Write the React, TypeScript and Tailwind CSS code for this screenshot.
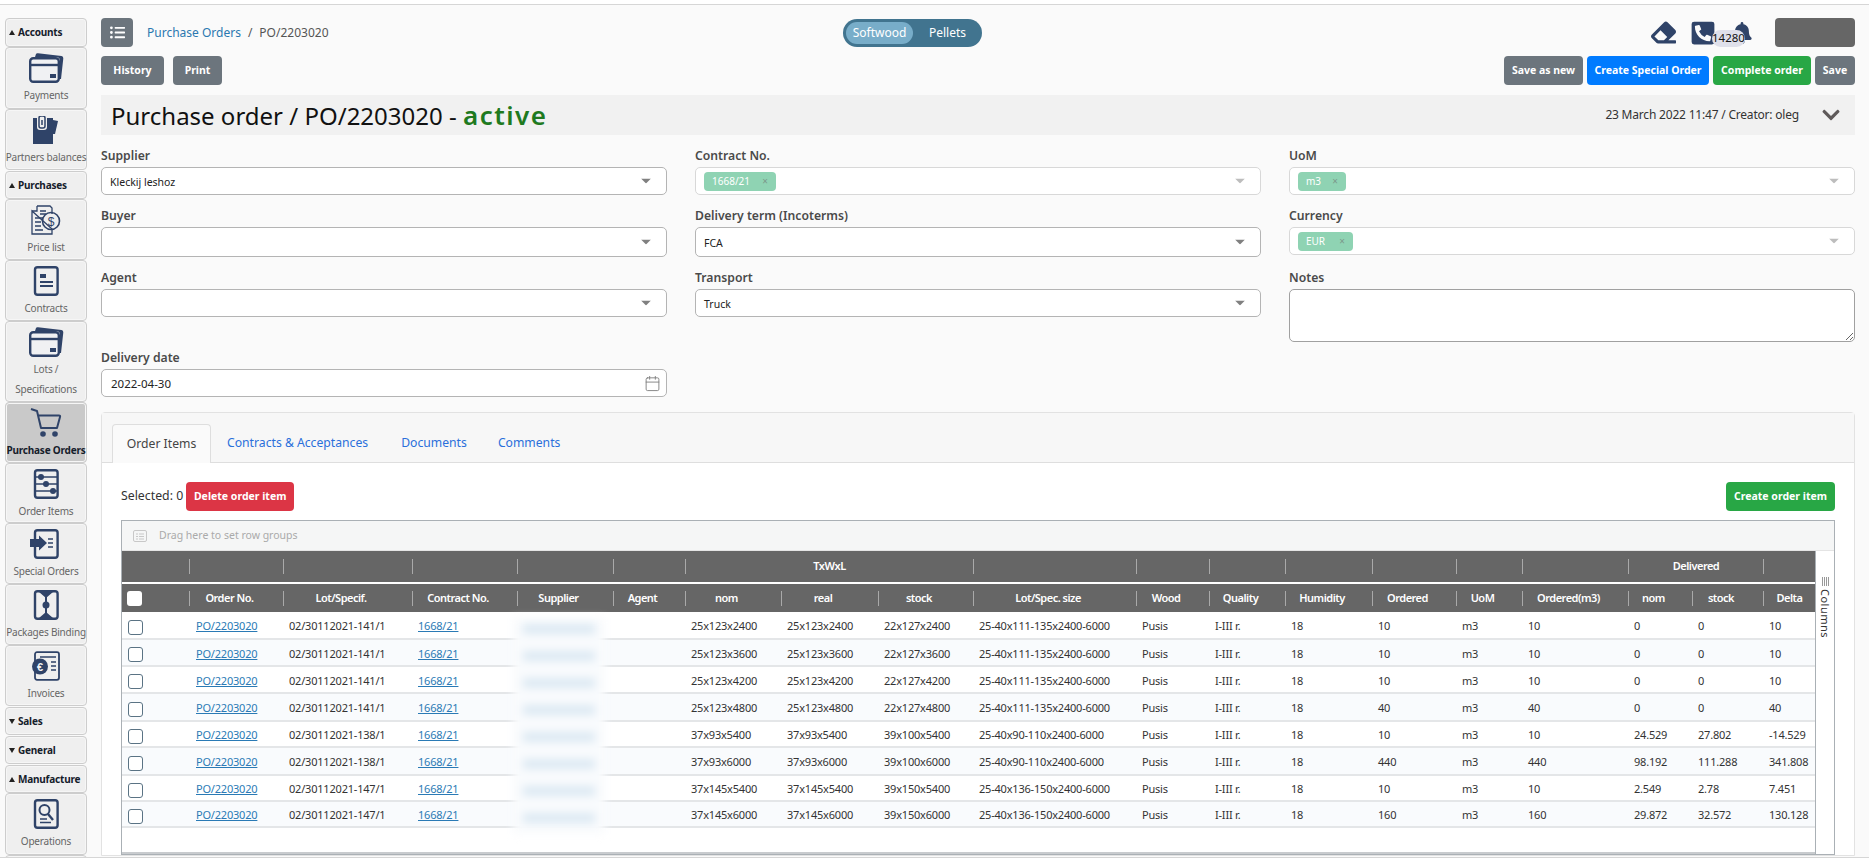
import type { ReactNode } from 'react';
import { Calendar } from 'lucide-react';
import { FaBell, FaChevronDown, FaEraser, FaListUl, FaPhoneSquareAlt } from 'react-icons/fa';

const NAVY = '#2f4368';

const CardIcon = () => (
  <svg width="35" height="30" viewBox="0 0 35 30">
    <path d="M6 4 L7 1 Q7.500 0 9 .3 L32.500 3 Q34.500 3.400 34.300 5.500 L32 26 L31 26 L31 8 Q31 4 27 4 Z" fill={NAVY} />
    <rect x="1.200" y="5.200" width="28.600" height="23.600" rx="3" fill="#f0f1f3" stroke={NAVY} strokeWidth="2.400" />
    <path d="M1 12 H30" stroke={NAVY} strokeWidth="2.400" />
    <rect x="21" y="21" width="6" height="4" fill={NAVY} />
  </svg>
);

const PocketIcon = () => (
  <svg width="28" height="28" viewBox="0 0 28 28">
    <path d="M21 4 L26 5 L23 18 L21 18 Z" fill={NAVY} />
    <path d="M1 2 H5 V11 Q5 14 8 14 H12 Q15 14 15 11 V2 H21 V28 H1 Z" fill={NAVY} />
    <rect x="7" y="0" width="6" height="12" rx="2" fill="none" stroke={NAVY} strokeWidth="1.500" />
    <path d="M10 4 V9" stroke={NAVY} strokeWidth="1.500" />
  </svg>
);

const PriceIcon = () => (
  <svg width="30" height="31" viewBox="0 0 30 31" fill="none" stroke={NAVY} strokeWidth="1.300">
    <path d="M6 1 H19 L21 3 V9 M21 24 V29 H1 V6 Z" />
    <path d="M1 6 H6 V1" />
    <path d="M4 13 H12 M4 17 H10 M4 21 H10 M4 25 H12 M9 6 H15 M9 9 H15" strokeWidth="1.500" />
    <circle cx="20" cy="16" r="8.500" strokeWidth="1.600" />
    <text x="20" y="20.500" textAnchor="middle" fontSize="12" fill={NAVY} stroke="none" fontFamily="Liberation Sans, sans-serif">$</text>
  </svg>
);

const SheetIcon = ({ children }: { children: ReactNode }) => (
  <svg width="32" height="30" viewBox="0 0 32 30" fill="none">
    <rect x="5" y="1.200" width="22.600" height="27.600" rx="2.500" stroke={NAVY} strokeWidth="2.400" />
    {children}
  </svg>
);

const ContractIcon = () => (
  <SheetIcon>
    <rect x="10" y="8" width="6" height="4" fill={NAVY} />
    <path d="M10 16 H23 M10 20 H23" stroke={NAVY} strokeWidth="2" />
  </SheetIcon>
);

const ItemsIcon = () => (
  <SheetIcon>
    <path d="M5 8 H27 M5 15 H27 M5 22 H27" stroke={NAVY} strokeWidth="1.600" />
    <circle cx="11" cy="8" r="3" fill={NAVY} />
    <circle cx="16" cy="15" r="3" fill={NAVY} />
    <circle cx="23" cy="22" r="3" fill={NAVY} />
  </SheetIcon>
);

const SpecialIcon = () => (
  <SheetIcon>
    <path d="M0 10 H9 V6.500 L17 14 L9 21.500 V18 H0 Z" fill={NAVY} />
    <path d="M18 10 H23 M18 14 H23 M18 18 H23" stroke={NAVY} strokeWidth="1.500" />
  </SheetIcon>
);

const BindingIcon = () => (
  <SheetIcon>
    <path d="M16 1 V29" stroke={NAVY} strokeWidth="2" />
    <path d="M9 2 L16 8 L23 2 Z M9 28 L16 22 L23 28 Z" fill={NAVY} />
    <circle cx="16" cy="15" r="3.500" fill={NAVY} />
  </SheetIcon>
);

const InvoiceIcon = () => (
  <svg width="32" height="30" viewBox="0 0 32 30" fill="none">
    <rect x="5" y="1.200" width="24" height="27.600" rx="2" stroke={NAVY} strokeWidth="1.800" />
    <path d="M10 6 H26" stroke={NAVY} strokeWidth="1.500" />
    <circle cx="10" cy="15.500" r="8" fill={NAVY} />
    <text x="10" y="19.500" textAnchor="middle" fontSize="11" fontWeight="700" fill="#f0f1f3" fontFamily="Liberation Sans, sans-serif">€</text>
    <path d="M21 11 H26 M21 15 H26 M21 19 H26" stroke={NAVY} strokeWidth="1.500" />
  </svg>
);

const SearchDocIcon = () => (
  <SheetIcon>
    <circle cx="14.500" cy="11" r="5" stroke={NAVY} strokeWidth="2" />
    <path d="M18 15 L23 21" stroke={NAVY} strokeWidth="2.400" />
    <path d="M10 20 H17 M10 23.500 H21" stroke={NAVY} strokeWidth="1.500" />
  </SheetIcon>
);

const CartIcon = () => (
  <svg width="32" height="30" viewBox="0 0 32 30" fill="none">
    <path d="M1 1 L7 3 L11 20 H27 L30 9 Q30.500 7.500 29 7.500 L8 7.500" stroke={NAVY} strokeWidth="2" strokeLinejoin="round" />
    <circle cx="13" cy="26" r="2.800" fill={NAVY} />
    <circle cx="25" cy="26" r="2.800" fill={NAVY} />
  </svg>
);

const navBoxClass = 'w-full shrink-0 rounded-[4px] border border-[#cdcdcd] shadow-[inset_0_0_0_1px_#f6f6f6]';

function NavHeader({ label, open, className }: { label: string; open: boolean; className: string }) {
  return (
    <div className={`${navBoxClass} flex items-center bg-[#efefef] pl-[3px] text-[10px] font-bold tracking-[-0.2px] text-[#15202b] ${className}`}>
      <svg width="6" height="5" viewBox="0 0 6 5" className="mr-[3px] shrink-0">
        <path d={open ? 'M3 0 L6 5 H0 Z' : 'M0 0 H6 L3 5 Z'} fill="#222" />
      </svg>
      {label}
    </div>
  );
}

function NavItem({ label, icon, className = '', active = false }: { label: ReactNode; icon: ReactNode; className?: string; active?: boolean }) {
  return (
    <div className={`${navBoxClass} flex flex-col items-center pt-[5px] text-center text-[10px] leading-[20px] tracking-[-0.2px] ${active ? 'bg-[#c9c9c9] font-bold text-[#15202b]' : 'bg-[#efefef] text-[#666]'} ${className}`}>
      <div className="flex h-[30px] items-center justify-center">{icon}</div>
      <div className="mt-[2px] whitespace-nowrap">{label}</div>
    </div>
  );
}

function Sidebar() {
  return (
    <aside className="flex w-[82px] shrink-0 flex-col">
      <NavHeader label="Accounts" open className="h-[29px]" />
      <NavItem label="Payments" icon={<CardIcon />} className="h-[62px]" />
      <NavItem label="Partners balances" icon={<PocketIcon />} className="h-[61px]" />
      <NavHeader label="Purchases" open className="mt-px h-[28px]" />
      <NavItem label="Price list" icon={<PriceIcon />} className="h-[61px]" />
      <NavItem label="Contracts" icon={<ContractIcon />} className="h-[61px]" />
      <NavItem label={<>Lots /<br />Specifications</>} icon={<CardIcon />} className="h-[81px]" />
      <NavItem label="Purchase Orders" icon={<CartIcon />} className="h-[61px]" active />
      <NavItem label="Order Items" icon={<ItemsIcon />} className="h-[60px]" />
      <NavItem label="Special Orders" icon={<SpecialIcon />} className="h-[61px]" />
      <NavItem label="Packages Binding" icon={<BindingIcon />} className="h-[61px]" />
      <NavItem label="Invoices" icon={<InvoiceIcon />} className="h-[61px]" />
      <NavHeader label="Sales" open={false} className="mt-px h-[28px]" />
      <NavHeader label="General" open={false} className="mt-px h-[28px]" />
      <NavHeader label="Manufacture" open className="mt-px h-[28px]" />
      <NavItem label="Operations" icon={<SearchDocIcon />} className="h-[62px]" />
      <div className={`${navBoxClass} h-[30px] bg-[#efefef]`} />
    </aside>
  );
}

function Btn({ children, className }: { children: ReactNode; className: string }) {
  return (
    <button className={`flex h-[29px] items-center justify-center rounded-[4px] text-[10.500px] font-bold text-white ${className}`}>
      {children}
    </button>
  );
}

function Arrow({ light = false }: { light?: boolean }) {
  return (
    <svg width="10" height="5" viewBox="0 0 10 5" className="absolute right-[15px] top-1/2 -translate-y-1/2">
      <path d="M0 0 H10 L5 5 Z" fill={light ? '#bdbdbd' : '#808080'} />
    </svg>
  );
}

function Field({ label, children, className = 'pt-[12px]' }: { label: string; children: ReactNode; className?: string }) {
  return (
    <div className={className}>
      <div className="h-[20px] text-[12.200px] leading-[17px] font-semibold text-[#4a4a4a]">{label}</div>
      {children}
    </div>
  );
}

function SelectBox({ value, className = 'h-[28px]' }: { value?: string; className?: string }) {
  return (
    <div className={`relative flex items-center rounded-[5px] border border-[#b4b4b4] bg-white pl-[8px] pt-[3px] text-[10.500px] text-[#222] ${className}`}>
      {value}
      <Arrow />
    </div>
  );
}

function TagBox({ tag, className }: { tag: string; className: string }) {
  return (
    <div className="relative flex h-[28px] items-center rounded-[5px] border border-[#d8d8d8] bg-white pl-[8px]">
      <span className={`flex h-[19px] items-center justify-between rounded-[4px] bg-[#8fd3b3] px-[8px] text-[10px] text-white ${className}`}>
        {tag}
        <span className="text-[#7c9a8c]">×</span>
      </span>
      <Arrow light />
    </div>
  );
}

function Form() {
  return (
    <div className="grid grid-cols-3 gap-x-[28px]">
      <Field label="Supplier"><SelectBox value="Kleckij leshoz" /></Field>
      <Field label="Contract No."><TagBox tag="1668/21" className="w-[72px]" /></Field>
      <Field label="UoM"><TagBox tag="m3" className="w-[48px]" /></Field>
      <Field label="Buyer"><SelectBox className="h-[30px]" /></Field>
      <Field label="Delivery term (Incoterms)"><SelectBox value="FCA" className="h-[30px]" /></Field>
      <Field label="Currency"><TagBox tag="EUR" className="w-[55px]" /></Field>
      <Field label="Agent"><SelectBox /></Field>
      <Field label="Transport"><SelectBox value="Truck" /></Field>
      <Field label="Notes">
        <textarea readOnly className="block h-[53px] w-full rounded-[5px] border border-[#a0a0a0] bg-white" />
      </Field>
      <Field label="Delivery date" className="pt-[7px]">
        <div className="relative flex h-[28px] items-center rounded-[5px] border border-[#b4b4b4] bg-white pl-[9px] pt-px text-[11.500px] text-[#222]">
          2022-04-30
          <Calendar size={17} strokeWidth={1.300} color="#808080" className="absolute right-[5px] top-[5px]" />
        </div>
      </Field>
    </div>
  );
}

const colsClass = 'grid grid-cols-[67px_94px_129px_105px_96px_72px_96px_97px_95px_163px_73px_76px_87px_84px_66px_106px_64px_71px_52px]';

const headers = ['Order No.', 'Lot/Specif.', 'Contract No.', 'Supplier', 'Agent', 'nom', 'real', 'stock', 'Lot/Spec. size', 'Wood', 'Quality', 'Humidity', 'Ordered', 'UoM', 'Ordered(m3)', 'nom', 'stock'];

const rows = [
  ['02/30112021-141/1', '25x123x2400', '25x123x2400', '22x127x2400', '25-40x111-135x2400-6000', '10', '10', '0', '0', '10'],
  ['02/30112021-141/1', '25x123x3600', '25x123x3600', '22x127x3600', '25-40x111-135x2400-6000', '10', '10', '0', '0', '10'],
  ['02/30112021-141/1', '25x123x4200', '25x123x4200', '22x127x4200', '25-40x111-135x2400-6000', '10', '10', '0', '0', '10'],
  ['02/30112021-141/1', '25x123x4800', '25x123x4800', '22x127x4800', '25-40x111-135x2400-6000', '40', '40', '0', '0', '40'],
  ['02/30112021-138/1', '37x93x5400', '37x93x5400', '39x100x5400', '25-40x90-110x2400-6000', '10', '10', '24.529', '27.802', '-14.529'],
  ['02/30112021-138/1', '37x93x6000', '37x93x6000', '39x100x6000', '25-40x90-110x2400-6000', '440', '440', '98.192', '111.288', '341.808'],
  ['02/30112021-147/1', '37x145x5400', '37x145x5400', '39x150x5400', '25-40x136-150x2400-6000', '10', '10', '2.549', '2.78', '7.451'],
  ['02/30112021-147/1', '37x145x6000', '37x145x6000', '39x150x6000', '25-40x136-150x2400-6000', '160', '160', '29.872', '32.572', '130.128'],
];

const rowHeights = ['h-[28px]', 'h-[27px]', 'h-[27px]', 'h-[28px]', 'h-[26px]', 'h-[28px]', 'h-[26px]', 'h-[26px]'];

function HeadCell({ children, className = '', mark = true }: { children?: ReactNode; className?: string; mark?: boolean }) {
  return (
    <div className={`flex items-center justify-center ${className}`}>
      {mark && <span className="h-[15px] w-px shrink-0 bg-[#a9a9a9]" />}
      <span className="flex-1 text-center">{children}</span>
    </div>
  );
}

function Checkbox() {
  return <span className="block size-[15px] rounded-[3px] border border-[#5a7384] bg-white" />;
}

function Cell({ children }: { children?: ReactNode }) {
  return <div className="flex items-center pl-[6px] pt-[3px] whitespace-nowrap">{children}</div>;
}

function OrderRow({ row, index }: { row: string[]; index: number }) {
  const [lot, nom, real, stock, size, ordered, orderedM3, dNom, dStock, delta] = row;
  return (
    <div className={`${colsClass} ${rowHeights[index]} border-b-2 border-[#e4e6e8] text-[11px] tracking-[-0.2px] text-[#333] ${index % 2 ? 'bg-[#f9fbfd]' : 'bg-white'}`}>
      <div className="flex items-center pl-[6px] pt-[4px]"><Checkbox /></div>
      <div className="flex items-center pl-[7px] pt-[3px]"><a className="text-[#2a7ab5] underline">PO/2203020</a></div>
      <Cell>{lot}</Cell>
      <Cell><a className="text-[#2a7ab5] underline">1668/21</a></Cell>
      <Cell />
      <Cell />
      <Cell>{nom}</Cell>
      <Cell>{real}</Cell>
      <Cell>{stock}</Cell>
      <Cell>{size}</Cell>
      <Cell>Pusis</Cell>
      <Cell>I-III r.</Cell>
      <Cell>18</Cell>
      <Cell>{ordered}</Cell>
      <Cell>m3</Cell>
      <Cell>{orderedM3}</Cell>
      <Cell>{dNom}</Cell>
      <Cell>{dStock}</Cell>
      <Cell>{delta}</Cell>
    </div>
  );
}

function OrdersTable() {
  return (
    <div className="border border-[#aab0b5]">
      <div className="flex h-[30px] items-center border-b border-[#e4e4e4] bg-[#f5f6f6] pl-[11px] text-[10.500px] text-[#aaa]">
        <svg width="14" height="14" viewBox="0 0 14 14" fill="none" stroke="#c8c8c8" className="mr-[12px]">
          <rect x=".5" y="1.500" width="13" height="11" rx="1.500" />
          <path d="M3 5 H5 M6 5 H11 M3 7.500 H5 M6 7.500 H11 M3 10 H5 M6 10 H11" />
        </svg>
        Drag here to set row groups
      </div>
      <div className="flex">
        <div className="w-[1693px]">
          <div className="h-[31px] bg-[#666] text-[11px] font-semibold tracking-[-0.5px] text-white">
            <div className="grid h-full grid-cols-[67px_94px_129px_105px_96px_72px_288px_163px_73px_76px_87px_84px_66px_106px_135px_52px]">
              <HeadCell mark={false} />
              <HeadCell />
              <HeadCell />
              <HeadCell />
              <HeadCell />
              <HeadCell />
              <HeadCell>TxWxL</HeadCell>
              <HeadCell />
              <HeadCell />
              <HeadCell />
              <HeadCell />
              <HeadCell />
              <HeadCell />
              <HeadCell />
              <HeadCell>Delivered</HeadCell>
              <HeadCell />
            </div>
          </div>
          <div className={`${colsClass} mt-[2px] h-[28px] bg-[#666] text-[11px] font-semibold tracking-[-0.5px] text-white`}>
            <div className="flex items-center pl-[5px]"><span className="block size-[15px] rounded-[3px] bg-white" /></div>
            {headers.map((h, i) => (
              <HeadCell key={i} className="pr-[14px]">{h}</HeadCell>
            ))}
            <HeadCell>Delta</HeadCell>
          </div>
          <div className="relative">
            {rows.map((row, i) => (
              <OrderRow key={i} row={row} index={i} />
            ))}
            <div className="absolute left-[391px] top-[6px] flex h-[216px] w-[92px] flex-col gap-[17px] bg-[#f9fbfd] px-[10px] pt-[6px] blur-[4px]">
              <span className="h-[10px] shrink-0 bg-[#dce9f3]" />
              <span className="h-[10px] shrink-0 bg-[#dce9f3]" />
              <span className="h-[10px] shrink-0 bg-[#dce9f3]" />
              <span className="h-[10px] shrink-0 bg-[#dce9f3]" />
              <span className="h-[10px] shrink-0 bg-[#dce9f3]" />
              <span className="h-[10px] shrink-0 bg-[#dce9f3]" />
              <span className="h-[10px] shrink-0 bg-[#dce9f3]" />
              <span className="h-[10px] shrink-0 bg-[#dce9f3]" />
            </div>
            <div className="h-[26px] border-b-2 border-[#c8cbce]" />
          </div>
        </div>
        <div className="flex w-[20px] flex-col items-center border-l border-[#aab0b5] bg-white pt-[26px] text-[11px] text-[#333]">
          <span className="mb-[3px] flex gap-px">
            <span className="h-[9px] w-px bg-[#999]" />
            <span className="h-[9px] w-px bg-[#999]" />
            <span className="h-[9px] w-px bg-[#999]" />
            <span className="h-[9px] w-px bg-[#999]" />
          </span>
          <span className="tracking-[0.5px] [writing-mode:vertical-rl]">Columns</span>
        </div>
      </div>
    </div>
  );
}

function TabsPanel() {
  return (
    <div className="mt-[15px] rounded-t-[4px] border border-[#e2e2e2]">
      <div className="flex h-[50px] items-end border-b border-[#dedede] bg-[#f7f7f7] pl-[10px] text-[12.200px] text-[#2a6fdb]">
        <div className="mb-[-1px] flex h-[39px] w-[99px] items-center justify-center rounded-t-[4px] border border-b-0 border-[#dedede] bg-[#fafafa] pt-px text-[#444]">Order Items</div>
        <div className="ml-[16px] flex h-[38px] items-center pt-px">Contracts &amp; Acceptances</div>
        <div className="ml-[33px] flex h-[38px] items-center pt-px">Documents</div>
        <div className="ml-[31px] flex h-[38px] items-center pt-px">Comments</div>
      </div>
      <div className="bg-white px-[19px] pt-[19px]">
        <div className="flex h-[29px] items-center justify-between">
          <div className="flex items-center text-[12.300px] text-[#333]">
            Selected: 0
            <Btn className="ml-[3px] w-[108px] bg-[#dc3545]">Delete order item</Btn>
          </div>
          <Btn className="w-[109px] bg-[#28a745]">Create order item</Btn>
        </div>
        <div className="mt-[9px]">
          <OrdersTable />
        </div>
      </div>
    </div>
  );
}

export default function App() {
  return (
    <div className="h-[863px] w-[1869px] overflow-hidden bg-white pt-[4px] font-['Noto_Sans',sans-serif]">
      <div className="flex h-[854px] overflow-hidden border-y border-[#d6d6d6] bg-[#fafafa] pl-[5px] pr-[14px] pt-[13px]">
        <Sidebar />
        <main className="ml-[14px] w-[1754px] shrink-0">
          <div className="flex h-[29px] items-center">
            <div className="flex w-[742px] items-center">
              <button className="flex h-[29px] w-[32px] items-center justify-center rounded-[4px] bg-[#6c757d] text-white">
                <FaListUl size={15} />
              </button>
              <div className="ml-[14px] text-[12px] text-[#555]">
                <a className="text-[#2b78b0]">Purchase Orders</a>
                <span className="mx-[7px]">/</span>
                PO/2203020
              </div>
            </div>
            <div className="flex h-[28px] w-[139px] items-center rounded-full bg-[#41748f] pl-[3px] text-[12px] text-white">
              <span className="flex h-[22px] w-[67px] items-center justify-center rounded-full bg-[#78adc9]">Softwood</span>
              <span className="ml-[16px]">Pellets</span>
            </div>
            <div className="ml-auto flex items-center">
              <FaEraser size={25} color={NAVY} />
              <FaPhoneSquareAlt size={26} color={NAVY} className="ml-[14px]" />
              <div className="relative ml-[15px]">
                <FaBell size={22} color={NAVY} />
                <span className="absolute left-[-19px] top-[8px] flex h-[17px] w-[33px] items-center justify-center rounded-full bg-[#dfe0ea] text-[11.500px] text-[#111]">14280</span>
              </div>
              <div className="ml-[22px] h-[29px] w-[80px] rounded-[4px] bg-[#666]" />
            </div>
          </div>

          <div className="mt-[9px] flex justify-between">
            <div className="flex gap-[9px]">
              <Btn className="w-[63px] bg-[#6c757d]">History</Btn>
              <Btn className="w-[49px] bg-[#6c757d]">Print</Btn>
            </div>
            <div className="flex gap-[4px]">
              <Btn className="w-[79px] bg-[#6c757d]">Save as new</Btn>
              <Btn className="w-[122px] bg-[#007bff]">Create Special Order</Btn>
              <Btn className="w-[98px] bg-[#28a745]">Complete order</Btn>
              <Btn className="w-[40px] bg-[#6c757d]">Save</Btn>
            </div>
          </div>

          <div className="mt-[10px] flex h-[40px] items-center justify-between bg-[#f1f1f1] pl-[10px] pr-[14px]">
            <h1 className="text-[24px] text-[#111]">
              Purchase order / PO/2203020 - <span className="text-[26px] font-semibold tracking-[1.500px] text-[#1f7a1f]">active</span>
            </h1>
            <div className="flex items-center text-[12px] tracking-[-0.2px] text-[#333]">
              23 March 2022 11:47 / Creator: oleg
              <FaChevronDown size={20} color="#5f5a5a" className="ml-[22px]" />
            </div>
          </div>

          <Form />
          <TabsPanel />
        </main>
      </div>
    </div>
  );
}
